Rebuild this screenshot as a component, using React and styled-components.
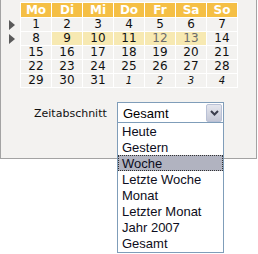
import React from 'react'
import styled, { createGlobalStyle } from 'styled-components'

const GlobalStyle = createGlobalStyle`
  html, body {
    margin: 0;
    padding: 0;
    background: #ffffff;
  }
  #root {
    min-height: 254px;
  }
`

const weekdays = ['Mo', 'Di', 'Mi', 'Do', 'Fr', 'Sa', 'So']

// each day: [label, kind]  kind: '' normal, 'hl' highlighted week, 'hlw' highlighted weekend, 'next' next month
const weeks = [
  [['1'], ['2'], ['3'], ['4'], ['5'], ['6'], ['7']],
  [['8'], ['9', 'hl'], ['10', 'hl'], ['11', 'hl'], ['12', 'hlw'], ['13', 'hlw'], ['14']],
  [['15'], ['16'], ['17'], ['18'], ['19'], ['20'], ['21']],
  [['22'], ['23'], ['24'], ['25'], ['26'], ['27'], ['28']],
  [['29'], ['30'], ['31'], ['1', 'next'], ['2', 'next'], ['3', 'next'], ['4', 'next']]
]

const options = ['Heute', 'Gestern', 'Woche', 'Letzte Woche', 'Monat', 'Letzter Monat', 'Jahr 2007', 'Gesamt']

const Page = styled.div`
  min-height: 254px;
`

const Panel = styled.div`
  box-sizing: border-box;
  width: 257px;
  height: 159px;
  background: #f3f2f0;
  border: 1px solid #a3a3a3;
  border-top: none;
  display: flex;
  flex-direction: column;
  font-family: "DejaVu Sans", Verdana, sans-serif;
`

const CalendarRow = styled.div`
  display: flex;
  padding-top: 2px;
`

const ArrowCol = styled.div`
  width: 19px;
  display: flex;
  flex-direction: column;
  padding-top: 16px;
`

const ArrowSlot = styled.div`
  height: 14px;
  display: flex;
  align-items: center;
  padding-left: 8px;
`

const Arrow = styled.span`
  width: 0;
  height: 0;
  border-top: 5px solid transparent;
  border-bottom: 5px solid transparent;
  border-left: 6px solid ${p => (p.$show ? '#5a5a5a' : 'transparent')};
`

const Table = styled.table`
  border-collapse: separate;
  border-spacing: 1px;
  background: #ffffff;
`

const Head = styled.th`
  width: 30px;
  height: 14px;
  padding: 0;
  background: #f5bf45;
  color: #ffffff;
  font-size: 12px;
  font-weight: bold;
  text-align: center;
  line-height: 14px;
`

const Day = styled.td`
  width: 30px;
  height: 13px;
  padding: 0;
  text-align: center;
  line-height: 13px;
  font-size: ${p => (p.$kind === 'next' ? '10px' : '12px')};
  font-style: ${p => (p.$kind === 'next' ? 'italic' : 'normal')};
  background: ${p => (p.$kind === 'hl' || p.$kind === 'hlw' ? '#f7e9b2' : '#f3f2f0')};
  color: ${p => (p.$kind === 'hlw' ? '#6b6b6b' : '#111111')};
`

const FormRow = styled.div`
  display: flex;
  align-items: center;
  margin-top: 14px;
  padding-left: 33px;
  gap: 9px;
`

const Label = styled.span`
  font-size: 11px;
  color: #111111;
  width: 74px;
  white-space: nowrap;
`

const Select = styled.div`
  position: relative;
  box-sizing: border-box;
  width: 107px;
  height: 22px;
  background: #ffffff;
  border: 1px solid #7f9db9;
  display: flex;
  align-items: center;
  font-family: "Liberation Sans", Arial, sans-serif;
  font-size: 13px;
  color: #000000;
  padding-left: 5px;
`

const Value = styled.span`
  flex: 1;
`

const DropButton = styled.span`
  box-sizing: border-box;
  width: 16px;
  height: 18px;
  margin-right: 1px;
  background: linear-gradient(#e4e6ee, #c4c7d6);
  border: 1px solid #b9c1d6;
  border-radius: 2px;
  display: flex;
  align-items: center;
  justify-content: center;
`

const List = styled.ul`
  position: absolute;
  left: -1px;
  top: calc(100% - 1px);
  box-sizing: border-box;
  width: 107px;
  margin: 0;
  padding: 0 0 1px;
  list-style: none;
  background: #ffffff;
  border: 1px solid #7f9db9;
  z-index: 2;
`

const Option = styled.li`
  box-sizing: border-box;
  height: 16px;
  line-height: 15px;
  padding-left: 3px;
  border: 1px dotted ${p => (p.$active ? '#333333' : 'transparent')};
  background: ${p => (p.$active ? '#b1b3c0' : 'transparent')};
  color: #0d0d20;
  white-space: nowrap;
`

export default function App() {
  return (
    <Page>
      <GlobalStyle />
      <Panel>
        <CalendarRow>
          <ArrowCol>
            {weeks.map((w, i) => (
              <ArrowSlot key={i}>
                <Arrow $show={i < 2} />
              </ArrowSlot>
            ))}
          </ArrowCol>
          <Table>
            <thead>
              <tr>
                {weekdays.map(d => <Head key={d}>{d}</Head>)}
              </tr>
            </thead>
            <tbody>
              {weeks.map((w, i) => (
                <tr key={i}>
                  {w.map(([label, kind], j) => (
                    <Day key={j} $kind={kind}>{label}</Day>
                  ))}
                </tr>
              ))}
            </tbody>
          </Table>
        </CalendarRow>
        <FormRow>
          <Label>Zeitabschnitt</Label>
          <Select>
            <Value>Gesamt</Value>
            <DropButton>
              <svg width="9" height="6" viewBox="0 0 9 6">
                <path d="M1 1 L4.5 4.5 L8 1" fill="none" stroke="#3a3d4d" strokeWidth="2" />
              </svg>
            </DropButton>
            <List>
              {options.map(o => (
                <Option key={o} $active={o === 'Woche'}>{o}</Option>
              ))}
            </List>
          </Select>
        </FormRow>
      </Panel>
    </Page>
  )
}
